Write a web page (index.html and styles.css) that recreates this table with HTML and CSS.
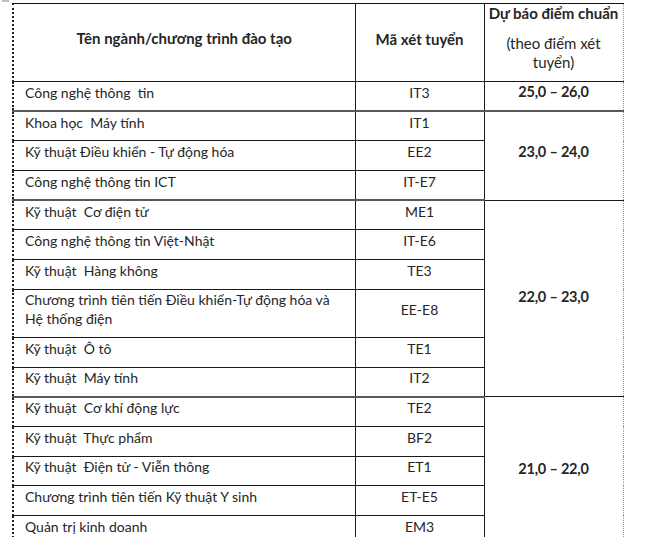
FILE: index.html
```html
<!DOCTYPE html>
<html lang="vi">
<head>
<meta charset="utf-8">
<link rel="stylesheet" href="styles.css">
</head>
<body>
<div class="handle"></div>
<table class="scores">
  <colgroup>
    <col class="c1"><col class="c2"><col class="c3">
  </colgroup>
  <thead>
    <tr class="head">
      <th class="name-h">Tên ngành/chương trình đào tạo</th>
      <th class="code-h">Mã xét tuyển</th>
      <th class="score-h">
        <div class="score-title">Dự báo điểm chuẩn</div>
        <div class="score-sub">(theo điểm xét tuyển)</div>
      </th>
    </tr>
  </thead>
  <tbody>
    <tr class="row group-end"><td class="name">Công nghệ thông&nbsp; tin</td><td class="code">IT3</td><td class="score s-hi">25,0 – 26,0</td></tr>

    <tr class="row"><td class="name">Khoa học&nbsp; Máy tính</td><td class="code">IT1</td><td class="score s-hi" rowspan="3">23,0 – 24,0</td></tr>
    <tr class="row"><td class="name">Kỹ thuật Điều khiển - Tự động hóa</td><td class="code">EE2</td></tr>
    <tr class="row group-end"><td class="name">Công nghệ thông tin ICT</td><td class="code">IT-E7</td></tr>

    <tr class="row"><td class="name">Kỹ thuật&nbsp; Cơ điện tử</td><td class="code">ME1</td><td class="score" rowspan="6">22,0 – 23,0</td></tr>
    <tr class="row"><td class="name">Công nghệ thông tin Việt-Nhật</td><td class="code">IT-E6</td></tr>
    <tr class="row"><td class="name">Kỹ thuật&nbsp; Hàng không</td><td class="code">TE3</td></tr>
    <tr class="row tall"><td class="name">Chương trình tiên tiến Điều khiển-Tự động hóa và Hệ thống điện</td><td class="code">EE-E8</td></tr>
    <tr class="row"><td class="name">Kỹ thuật&nbsp; Ô tô</td><td class="code">TE1</td></tr>
    <tr class="row group-end"><td class="name">Kỹ thuật&nbsp; Máy tính</td><td class="code">IT2</td></tr>

    <tr class="row"><td class="name">Kỹ thuật&nbsp; Cơ khí động lực</td><td class="code">TE2</td><td class="score" rowspan="5">21,0 – 22,0</td></tr>
    <tr class="row"><td class="name">Kỹ thuật&nbsp; Thực phẩm</td><td class="code">BF2</td></tr>
    <tr class="row"><td class="name">Kỹ thuật&nbsp; Điện tử - Viễn thông</td><td class="code">ET1</td></tr>
    <tr class="row"><td class="name">Chương trình tiên tiến Kỹ thuật Y sinh</td><td class="code">ET-E5</td></tr>
    <tr class="row"><td class="name">Quản trị kinh doanh</td><td class="code">EM3</td></tr>
  </tbody>
</table>
</body>
</html>
```

FILE: styles.css
```css
html, body {
  margin: 0;
  padding: 0;
  background: #ffffff;
}

body {
  font-family: "Lato", "Liberation Sans", sans-serif;
  font-size: 14px;
  color: #262626;
  height: 537px;
  overflow: hidden;
}

.handle {
  position: absolute;
  left: 2px;
  top: 0;
  width: 7px;
  height: 2px;
  background: #b8c4d0;
}

.scores {
  border-collapse: collapse;
  table-layout: fixed;
  width: 610px;
  margin: 3px 0 0 12px;
  border-top: 1px solid #111;
  border-left: 2px dotted #222;
  border-right: 1px dotted #999;
}

.c1 { width: 342px; }
.c2 { width: 129px; }
.c3 { width: 139px; }

th, td {
  padding: 0;
  border: 1px solid #1a1a1a;
  vertical-align: middle;
}

.scores th:first-child,
.scores td.name {
  border-left: 2px dotted #222;
}

.scores th:last-child,
.scores td.score {
  border-right: 1px dotted #999;
}

.scores th { border-top: 1px solid #111; }

.head { height: 78px; }

.head th {
  font-size: 15px;
  font-weight: bold;
  text-align: center;
}

.name-h { padding-bottom: 10px; }
.code-h { padding-bottom: 8px; }

.score-h {
  vertical-align: top;
}

.score-title {
  font-weight: bold;
  white-space: nowrap;
}

.score-sub {
  font-weight: normal;
  line-height: 19px;
  padding: 12px 18px 0;
}

.row { height: 29.7px; }
.row.tall { height: 48px; }

.row.group-end td { border-bottom: 2px solid #5a5a5a; }

td.name {
  text-align: left;
  padding: 0 8px 8px 11px;
  line-height: 19px;
}

td.code {
  text-align: center;
  padding-bottom: 8px;
}

td.score {
  text-align: center;
  font-size: 14.5px;
  font-weight: bold;
  letter-spacing: -0.2px;
  padding-bottom: 4px;
}

td.score.s-hi { padding-bottom: 9px; }

.row.tall td.name { padding-bottom: 9px; }
```
